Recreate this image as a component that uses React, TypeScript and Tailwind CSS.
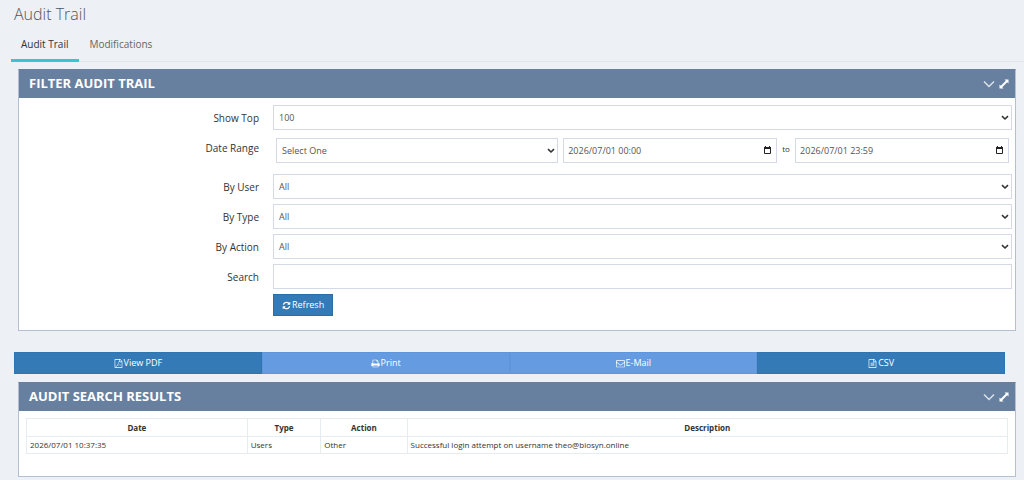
import { useState } from 'react'
import type { ReactNode } from 'react'

const iconPaths = {
  refresh: 'M1639 1056q0 5-1 7-64 268-268 434.5t-478 166.5q-146 0-282.5-55t-243.5-157l-129 129q-19 19-45 19t-45-19-19-45v-448q0-26 19-45t45-19h448q26 0 45 19t19 45-19 45l-137 137q71 66 161 102t187 36q134 0 250-65t186-179q11-17 53-117 8-23 30-23h192q13 0 22.5 9.5t9.5 22.5zm25-800v448q0 26-19 45t-45 19h-448q-26 0-45-19t-19-45 19-45l138-138q-148-137-349-137-134 0-250 65t-186 179q-11 17-53 117-8 23-30 23h-199q-13 0-22.5-9.5t-9.5-22.5v-7q65-268 270-434.5t480-166.5q146 0 284 55.5t245 156.5l130-129q19-19 45-19t45 19 19 45z',
  pdf: 'M1596 380q28 28 48 76t20 88v1152q0 40-28 68t-68 28h-1344q-40 0-68-28t-28-68v-1600q0-40 28-68t68-28h896q40 0 88 20t76 48zm-444-244v376h376q-10-29-22-41l-313-313q-12-12-41-22zm384 1528v-1024h-416q-40 0-68-28t-28-68v-416h-768v1536h1280zm-514-593q33 26 84 56 59-7 117-7 147 0 177 49 16 22 2 52 0 1-1 2l-2 2v1q-6 38-71 38-48 0-115-20t-130-53q-221 24-392 83-153 262-242 262-15 0-28-7l-24-12q-1-1-6-5-10-10-6-36 9-40 56-91.5t132-96.5q14-9 23 6 2 2 2 4 52-85 107-197 68-136 104-262-24-82-30.5-159.5t6.5-127.5q11-40 42-40h22q23 0 35 15 18 21 9 68-2 6-4 8 1 3 1 8v30q-2 123-14 192 55 164 146 238zm-576 411q52-24 137-158-51 40-87.5 84t-49.5 74zm398-920q-15 42-2 132 1-7 7-44 0-3 7-43 1-4 4-8-1-1-1-2-1-2-1-3-1-22-13-36 0 1-1 2v2zm-124 661q135-54 284-81-2-1-13-9.5t-16-13.5q-76-67-127-176-27 86-83 197-30 56-45 83zm646-16q-24-24-140-24 76 28 124 28 14 0 18-1 0-1-2-3z',
  print: 'M448 1536h896v-256h-896v256zm0-640h896v-384h-160q-40 0-68-28t-28-68v-160h-640v640zm1152 64q0-26-19-45t-45-19-45 19-19 45 19 45 45 19 45-19 19-45zm128 0v416q0 13-9.5 22.5t-22.5 9.5h-224v160q0 40-28 68t-68 28h-960q-40 0-68-28t-28-68v-160h-224q-13 0-22.5-9.5t-9.5-22.5v-416q0-79 56.5-135.5t135.5-56.5h64v-544q0-40 28-68t68-28h672q40 0 88 20t76 48l152 152q28 28 48 76t20 88v256h64q79 0 135.5 56.5t56.5 135.5z',
  mail: 'M1664 1504v-768q-32 36-69 66-268 206-426 338-51 43-83 67t-86.5 48.5-102.5 24.5h-2q-48 0-102.5-24.5t-86.5-48.5-83-67q-158-132-426-338-37-30-69-66v768q0 13 9.5 22.5t22.5 9.5h1472q13 0 22.5-9.5t9.5-22.5zm0-1051v-24.5l-.5-13-3-12.5-5.5-9-9-7.5-14-2.5h-1472q-13 0-22.5 9.5t-9.5 22.5q0 168 147 284 193 152 401 317 6 5 35 29.5t46 37.5 44.5 31.5 50.5 27.5 43 9h2q20 0 43-9t50.5-27.5 44.5-31.5 46-37.5 35-29.5q208-165 401-317 54-43 100.5-115.5t46.5-131.5zm128-37v1088q0 66-47 113t-113 47h-1472q-66 0-113-47t-47-113v-1088q0-66 47-113t113-47h1472q66 0 113 47t47 113z',
  csv: 'M1596 380q28 28 48 76t20 88v1152q0 40-28 68t-68 28h-1344q-40 0-68-28t-28-68v-1600q0-40 28-68t68-28h896q40 0 88 20t76 48zm-444-244v376h376q-10-29-22-41l-313-313q-12-12-41-22zm384 1528v-1024h-416q-40 0-68-28t-28-68v-416h-768v1536h1280zm-1024-864q0-14 9-23t23-9h704q14 0 23 9t9 23v64q0 14-9 23t-23 9h-704q-14 0-23-9t-9-23v-64zm736 224q14 0 23 9t9 23v64q0 14-9 23t-23 9h-704q-14 0-23-9t-9-23v-64q0-14 9-23t23-9h704zm0 256q14 0 23 9t9 23v64q0 14-9 23t-23 9h-704q-14 0-23-9t-9-23v-64q0-14 9-23t23-9h704z',
}

const Icon = ({ name }: { name: keyof typeof iconPaths }) => (
  <svg viewBox="0 0 1792 1792" className="size-[9px] shrink-0 fill-current" aria-hidden="true">
    <path d={iconPaths[name]} />
  </svg>
)

const Panel = ({ title, children }: { title: string; children: ReactNode }) => {
  const [open, setOpen] = useState(true)

  return (
    <section className="mr-2 ml-[18px] border border-[#b3bfd2] border-t-[#67809f] bg-white">
      <header className="flex h-7 items-center justify-between bg-[#67809f] pr-[6px] pl-[10px] text-white">
        <h2 className="text-[13px] font-bold uppercase">{title}</h2>
        <div className="flex items-center gap-1">
          <button type="button" aria-label="Collapse" onClick={() => setOpen(!open)}>
            <svg viewBox="0 0 12 10" className="h-[10px] w-3" fill="none" stroke="#dbe2ea" strokeWidth="1.5">
              <path d="M1 2.500 6 7.500 11 2.500" />
            </svg>
          </button>
          <button type="button" aria-label="Full screen">
            <svg viewBox="0 0 10 10" className="size-[10px]" fill="#fff">
              <path d="M5.500.5h4v4L8.200 3.200 3.200 8.200 4.500 9.500h-4v-4L1.800 6.800 6.800 1.800z" />
            </svg>
          </button>
        </div>
      </header>
      {open && children}
    </section>
  )
}

const Row = ({ id, label, children }: { id?: string; label?: string; children: ReactNode }) => (
  <div className="flex">
    <div className="w-1/4 pt-[5px] pr-[9px] text-right text-[10px] leading-4 text-[#333]">
      {label && <label htmlFor={id}>{label}</label>}
    </div>
    <div className="w-3/4 pr-[3px] pl-[5px]">{children}</div>
  </div>
)

const field = 'block h-[25px] w-full border border-[#d5d9e6] bg-white px-[5px] text-[9px] text-[#555] outline-none'

const Select = ({ id, options }: { id: string; options: string[] }) => (
  <div className="relative">
    <select id={id} className={`${field} appearance-none`}>
      {options.map((o) => <option key={o}>{o}</option>)}
    </select>
    <svg
      viewBox="0 0 8 6"
      className="pointer-events-none absolute top-[10px] right-[3px] h-[6px] w-2"
      fill="none"
      stroke="#333"
      strokeWidth="1.6"
    >
      <path d="M1 1.200 4 4 7 1.200" />
    </svg>
  </div>
)

const SelectRow = ({ id, label, options }: { id: string; label: string; options: string[] }) => (
  <Row id={id} label={label}>
    <Select id={id} options={options} />
  </Row>
)

const DateInput = ({ label, initial }: { label: string; initial: string }) => {
  const [value, setValue] = useState(initial)

  return (
    <div className="flex h-[25px] min-w-0 flex-1 items-center border border-[#d5d9e6] bg-white px-1">
      <input
        type="text"
        aria-label={label}
        className="min-w-0 flex-1 text-[9px] text-[#555] outline-none"
        value={value}
        onChange={(e) => setValue(e.target.value)}
      />
      <button type="button" aria-label="Open calendar">
        <svg viewBox="0 0 9 9" className="size-[9px]">
          <path d="M1.500 2.500h6v5h-6z" fill="none" stroke="#222" />
          <path d="M1 1h7v2H1zM2 0h1v1H2zM6 0h1v1H6z" fill="#222" />
        </svg>
      </button>
    </div>
  )
}

const exportButtons: { label: string; icon: keyof typeof iconPaths; style: string }[] = [
  { label: 'View PDF', icon: 'pdf', style: 'border-[#3075b0] bg-[#337ab7]' },
  { label: 'Print', icon: 'print', style: 'border-[#5e96de] bg-[#659be0]' },
  { label: 'E-Mail', icon: 'mail', style: 'border-[#5e96de] bg-[#659be0]' },
  { label: 'CSV', icon: 'csv', style: 'border-[#3075b0] bg-[#337ab7]' },
]

const App = () => {
  const [search, setSearch] = useState('')
  const [tab, setTab] = useState('Audit Trail')

  return (
    <main className="min-h-screen bg-[#edf0f5] pb-1 font-['Open_Sans',sans-serif]">
      <h1 className="pt-1 pl-[14px] text-[16px] leading-5 font-light text-[#555]">Audit Trail</h1>

      <nav className="mt-1 ml-[11px] flex h-[34px] border-b border-[#e1e5eb]">
        {['Audit Trail', 'Modifications'].map((t) => (
          <button
            key={t}
            type="button"
            onClick={() => setTab(t)}
            className={`-mb-px border-b-3 pt-[2px] pr-[11px] pl-[10px] text-[10px] ${tab === t ? 'border-[#36c6d3] text-[#333]' : 'border-transparent text-[#666]'}`}
          >
            {t}
          </button>
        ))}
      </nav>

      <div className="mt-[7px]">
        <Panel title="Filter Audit Trail">
          <form className="flex flex-col gap-[5px] pt-[7px] pb-[14px]" onSubmit={(e) => e.preventDefault()}>
            <SelectRow id="top" label="Show Top" options={['100', '500', '1000']} />
            <Row id="range" label="Date Range">
              <div className="flex items-center px-[3px] pt-[3px] pb-[6px]">
                <div className="w-[38.5%]">
                  <Select id="range" options={['Select One', 'Today', 'Yesterday']} />
                </div>
                <div className="flex flex-1 items-center pl-[5px]">
                  <DateInput label="From" initial="2026/07/01 00:00" />
                  <span className="w-[18px] pb-1 text-center text-[8px] text-[#333]">to</span>
                  <DateInput label="To" initial="2026/07/01 23:59" />
                </div>
              </div>
            </Row>
            <SelectRow id="user" label="By User" options={['All']} />
            <SelectRow id="type" label="By Type" options={['All']} />
            <SelectRow id="action" label="By Action" options={['All']} />
            <Row id="search" label="Search">
              <input
                id="search"
                type="text"
                className={field}
                value={search}
                onChange={(e) => setSearch(e.target.value)}
              />
            </Row>
            <Row>
              <button
                type="submit"
                className="flex h-[22px] items-center gap-px border border-[#2e6da4] bg-[#337ab7] px-2 text-[9px] text-white"
              >
                <Icon name="refresh" />
                Refresh
              </button>
            </Row>
          </form>
        </Panel>
      </div>

      <div className="mt-[21px] mr-[19px] ml-[14px] grid grid-cols-4">
        {exportButtons.map((b) => (
          <button
            key={b.label}
            type="button"
            className={`flex h-[22px] items-center justify-center gap-px border text-[9px] text-white ${b.style}`}
          >
            <Icon name={b.icon} />
            {b.label}
          </button>
        ))}
      </div>

      <div className="mt-2">
        <Panel title="Audit Search Results">
          <div className="px-[7px] pt-[7px] pb-[22px]">
            <table className="w-full table-fixed border-collapse text-[8px] leading-3 text-[#333]">
              <thead>
                <tr className="h-[18px]">
                  <th className="w-[22.5%] border border-[#e7ecf1]">Date</th>
                  <th className="w-[7.5%] border border-[#e7ecf1]">Type</th>
                  <th className="w-[8.8%] border border-[#e7ecf1]">Action</th>
                  <th className="border border-[#e7ecf1]">Description</th>
                </tr>
              </thead>
              <tbody>
                <tr className="h-[17px]">
                  <td className="border border-[#e7ecf1] px-[3px]">2026/07/01 10:37:35</td>
                  <td className="border border-[#e7ecf1] px-[3px]">Users</td>
                  <td className="border border-[#e7ecf1] px-[3px]">Other</td>
                  <td className="border border-[#e7ecf1] px-[3px]">Successful login attempt on username theo@biosyn.online</td>
                </tr>
              </tbody>
            </table>
          </div>
        </Panel>
      </div>
    </main>
  )
}
export default App
